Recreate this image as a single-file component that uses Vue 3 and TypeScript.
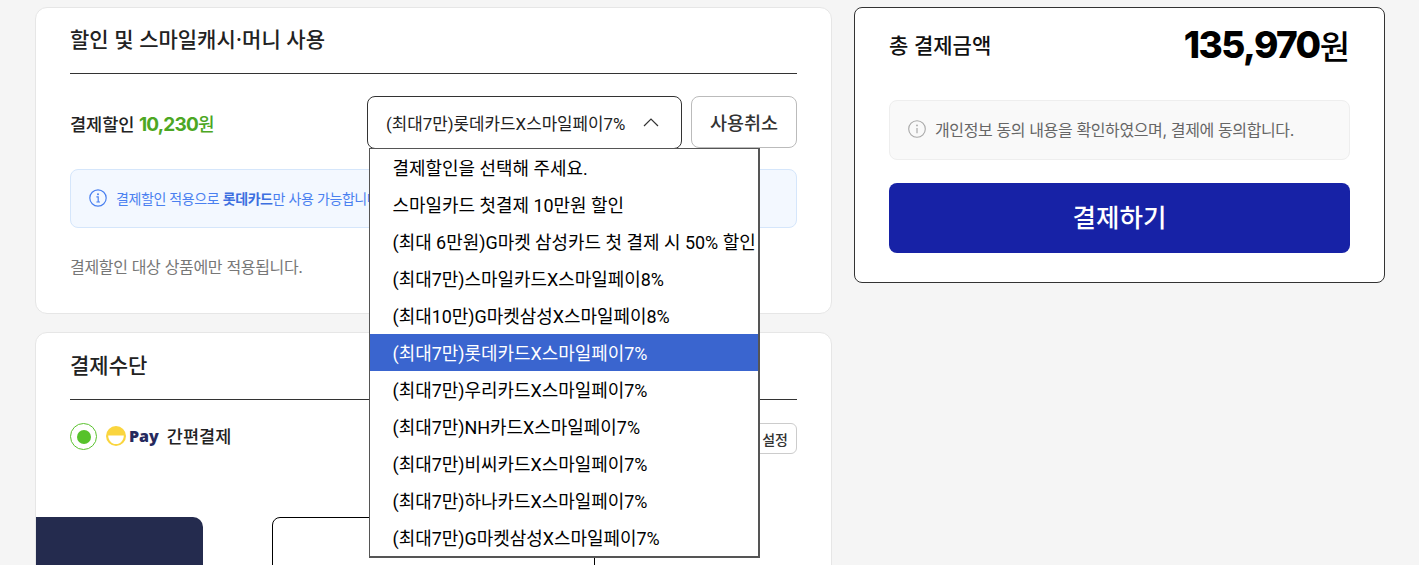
<script setup lang="ts">
const options: string[] = [
  '결제할인을 선택해 주세요.',
  '스마일카드 첫결제 10만원 할인',
  '(최대 6만원)G마켓 삼성카드 첫 결제 시 50% 할인',
  '(최대7만)스마일카드X스마일페이8%',
  '(최대10만)G마켓삼성X스마일페이8%',
  '(최대7만)롯데카드X스마일페이7%',
  '(최대7만)우리카드X스마일페이7%',
  '(최대7만)NH카드X스마일페이7%',
  '(최대7만)비씨카드X스마일페이7%',
  '(최대7만)하나카드X스마일페이7%',
  '(최대7만)G마켓삼성X스마일페이7%'
]
const selected = 5
</script>

<template>
  <div class="page">
    <div class="left">
      <section class="card first">
        <h2 class="title">할인 및 스마일캐시·머니 사용</h2>
        <div class="discount-row">
          <div class="discount-label">결제할인 <b class="green"><span class="num">10,230</span>원</b></div>
          <div class="controls">
            <div class="select-wrap">
              <div class="select">
                <span>(최대7만)롯데카드X스마일페이7%</span>
                <svg width="16" height="9" viewBox="0 0 16 9" fill="none"><path d="M1 8 L8 1 L15 8" stroke="#333" stroke-width="1.2"/></svg>
              </div>
              <ul class="menu">
                <li v-for="(o, i) in options" :key="o" :class="{ active: i === selected }">{{ o }}</li>
              </ul>
            </div>
            <button class="cancel">사용취소</button>
          </div>
        </div>
        <div class="notice">
          <svg width="18" height="18" viewBox="0 0 18 18" fill="none"><circle cx="9" cy="9" r="8.2" stroke="#4a80f0" stroke-width="1.2"/><circle cx="9" cy="5.2" r="1" fill="#4a80f0"/><path d="M7.4 7.9H9.2V13M7.4 13H11" stroke="#4a80f0" stroke-width="1.2"/></svg>
          <span>결제할인 적용으로 <b>롯데카드</b>만 사용 가능합니다.</span>
        </div>
        <p class="hint">결제할인 대상 상품에만 적용됩니다.</p>
      </section>

      <section class="card second">
        <h2 class="title tall">결제수단</h2>
        <div class="pay-row">
          <div class="pay-left">
            <span class="radio"><i></i></span>
            <svg class="smile" width="20" height="20" viewBox="0 0 20 20"><circle cx="10" cy="10" r="10" fill="#fad53e"/><path d="M2.2 9.4H17.8C17.8 14.2 14.4 18 10 18C5.6 18 2.2 14.2 2.2 9.4Z" fill="#fff"/></svg>
            <span class="pay">Pay</span>
            <span class="simple">간편결제</span>
          </div>
          <button class="setting">간편결제 설정</button>
        </div>
        <div class="cards">
          <div class="navy"></div>
          <div class="outline"></div>
        </div>
      </section>
    </div>

    <aside class="summary">
      <div class="total">
        <span class="total-label">총 결제금액</span>
        <span class="total-value"><span class="num">135,970</span><span class="won">원</span></span>
      </div>
      <div class="agree">
        <svg width="18" height="18" viewBox="0 0 18 18" fill="none"><circle cx="9" cy="9" r="8.3" stroke="#a8a8a8" stroke-width="1.1"/><circle cx="9" cy="5.4" r="0.9" fill="#a8a8a8"/><path d="M9 8V13.2" stroke="#a8a8a8" stroke-width="1.2"/></svg>
        <span>개인정보 동의 내용을 확인하였으며, 결제에 동의합니다.</span>
      </div>
      <button class="pay-btn">결제하기</button>
    </aside>
  </div>
</template>

<style>
html, body { margin: 0; height: 565px; overflow: hidden; background: #f5f5f5; }
</style>

<style scoped>
.page {
  display: flex;
  align-items: flex-start;
  gap: 22px;
  height: 558px;
  padding: 7px 0 0 35px;
  overflow: hidden;
  font-family: Inter, "Noto Sans CJK KR", "Noto Sans", sans-serif;
  color: #222;
}
.left { width: 797px; display: flex; flex-direction: column; gap: 18px; flex: none; }
.card {
  box-sizing: border-box;
  background: #fff;
  border: 1px solid #e6e6e6;
  border-radius: 12px;
  padding: 0 34px;
}
.first { height: 307px; }
.second { height: 300px; position: relative; }
.title {
  margin: 0;
  height: 66px;
  line-height: 64px;
  font-size: 21px;
  font-weight: 500;
  color: #222;
  border-bottom: 1px solid #333;
  box-sizing: border-box;
}
.title.tall { height: 67px; line-height: 65px; }
.discount-row {
  display: flex;
  justify-content: space-between;
  align-items: center;
  margin-top: 22px;
  height: 53px;
}
.discount-label { font-size: 17.6px; font-weight: 500; letter-spacing: -0.1px; }
.green { color: #4ca723; font-weight: 500; font-size: 18px; }
.num { font-family: Inter, "Noto Sans", sans-serif; font-weight: 700; letter-spacing: -0.8px; }
.green .num { font-size: 19px; }
.controls { display: flex; gap: 9px; }
.select-wrap { position: relative; }
.select {
  box-sizing: border-box;
  width: 315px;
  height: 53px;
  border: 1px solid #333;
  border-radius: 8px;
  padding: 0 22px 0 18px;
  display: flex;
  align-items: center;
  justify-content: space-between;
  font-family: Roboto, "Noto Sans CJK KR", sans-serif;
  font-size: 16.85px;
  color: #222;
  background: #fff;
}
.menu {
  position: absolute;
  z-index: 5;
  left: 2px;
  top: 52px;
  box-sizing: border-box;
  width: 391px;
  margin: 0;
  padding: 0;
  list-style: none;
  background: #fff;
  border: 1px solid #555;
  border-right-width: 2px;
  border-bottom-width: 2px;
  font-family: Roboto, "Noto Sans CJK KR", sans-serif;
  font-size: 17.95px;
  color: #000;
}
.menu li {
  height: 36px;
  line-height: 37px;
  padding: 1px 0 0 22.5px;
  white-space: nowrap;
  overflow: hidden;
}
.menu li.active { background: #3a65cf; color: #fff; }
.cancel {
  box-sizing: border-box;
  width: 106px;
  height: 52px;
  background: #fff;
  border: 1px solid #bbb;
  border-radius: 8px;
  font-family: inherit;
  font-size: 18.5px;
  font-weight: 500;
  color: #333;
  padding: 0;
}
.notice {
  box-sizing: border-box;
  margin-top: 20px;
  height: 59px;
  display: flex;
  align-items: center;
  gap: 9px;
  padding: 0 0 1px 18px;
  background: #f3f8ff;
  border: 1px solid #d5e6fb;
  border-radius: 8px;
  font-size: 14px;
  letter-spacing: -0.42px;
  color: #4a80f0;
  overflow: hidden;
}
.notice b { font-weight: 700; color: #3c6fe0; }
.hint {
  margin: 29px 0 0;
  font-size: 16px;
  letter-spacing: -0.33px;
  line-height: 20px;
  color: #777;
}
.pay-row {
  display: flex;
  justify-content: space-between;
  align-items: flex-start;
  margin-top: 23px;
}
.pay-left { display: flex; align-items: center; height: 27px; }
.radio {
  box-sizing: border-box;
  width: 27px;
  height: 27px;
  border: 1px solid #5ac22e;
  border-radius: 50%;
  display: flex;
  align-items: center;
  justify-content: center;
  margin-right: 9px;
}
.radio i { width: 14px; height: 14px; border-radius: 50%; background: #56c22b; display: block; }
.smile { margin: 0 3px 1px 0; }
.pay {
  font-family: "Open Sans", sans-serif;
  font-weight: 800;
  font-size: 16px;
  color: #262a5e;
  margin: 0 8px 1px 0;
}
.simple { font-size: 17.5px; font-weight: 500; color: #222; margin-bottom: 2px; }
.setting {
  box-sizing: border-box;
  height: 31px;
  width: 122px;
  background: #fff;
  border: 1px solid #ccc;
  border-radius: 6px;
  font-family: inherit;
  font-size: 14px;
  font-weight: 500;
  color: #333;
  padding: 0 8px 0 0;
  text-align: right;
  white-space: nowrap;
}
.cards { display: flex; margin: 63px 0 0 -34px; gap: 69px; }
.navy { width: 167px; height: 60px; background: #242b4e; border-radius: 0 10px 0 0; }
.outline {
  box-sizing: border-box;
  width: 323px;
  height: 60px;
  border: 1px solid #000;
  border-radius: 8px;
}
.summary {
  box-sizing: border-box;
  width: 531px;
  height: 276px;
  flex: none;
  background: #fff;
  border: 1px solid #333;
  border-radius: 8px;
  padding: 0 34px;
}
.total {
  display: flex;
  justify-content: space-between;
  align-items: center;
  height: 73px;
}
.total-label { font-size: 21px; font-weight: 500; color: #111; padding-bottom: 2px; }
.total-value { color: #000; display: flex; align-items: center; }
.total-value .num { font-size: 37px; font-weight: 800; letter-spacing: -1.6px; }
.won { font-size: 33px; font-weight: 500; }
.agree {
  box-sizing: border-box;
  margin-top: 19px;
  height: 60px;
  display: flex;
  align-items: center;
  gap: 9px;
  padding: 0 0 3px 18px;
  background: #f9f9f9;
  border: 1px solid #eee;
  border-radius: 8px;
  font-size: 16px;
  letter-spacing: -0.38px;
  color: #666;
}
.pay-btn {
  display: block;
  width: 100%;
  height: 70px;
  margin-top: 23px;
  padding: 0 0 5px;
  border: 0;
  border-radius: 8px;
  background: #1722a6;
  color: #fff;
  font-family: inherit;
  font-size: 25.5px;
  font-weight: 500;
}
</style>
